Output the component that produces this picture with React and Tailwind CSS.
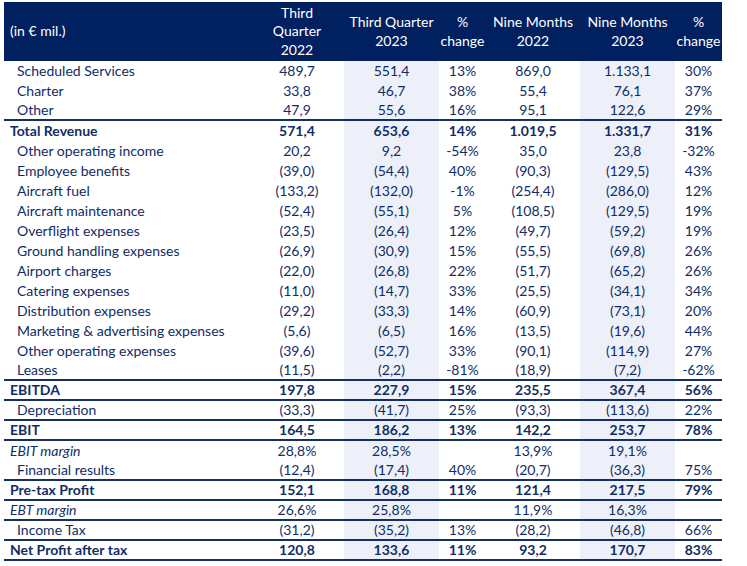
const cols = "grid grid-cols-[246px_94px_95px_47px_94px_95px_47px]";

const rows = [
  { label: "Scheduled Services", v: ["489,7", "551,4", "13%", "869,0", "1.133,1", "30%"], indent: true },
  { label: "Charter", v: ["33,8", "46,7", "38%", "55,4", "76,1", "37%"], indent: true },
  { label: "Other", v: ["47,9", "55,6", "16%", "95,1", "122,6", "29%"], indent: true, line: true },
  { label: "Total Revenue", v: ["571,4", "653,6", "14%", "1.019,5", "1.331,7", "31%"], bold: true },
  { label: "Other operating income", v: ["20,2", "9,2", "-54%", "35,0", "23,8", "-32%"], indent: true },
  { label: "Employee benefits", v: ["(39,0)", "(54,4)", "40%", "(90,3)", "(129,5)", "43%"], indent: true },
  { label: "Aircraft fuel", v: ["(133,2)", "(132,0)", "-1%", "(254,4)", "(286,0)", "12%"], indent: true },
  { label: "Aircraft maintenance", v: ["(52,4)", "(55,1)", "5%", "(108,5)", "(129,5)", "19%"], indent: true },
  { label: "Overflight expenses", v: ["(23,5)", "(26,4)", "12%", "(49,7)", "(59,2)", "19%"], indent: true },
  { label: "Ground handling expenses", v: ["(26,9)", "(30,9)", "15%", "(55,5)", "(69,8)", "26%"], indent: true },
  { label: "Airport charges", v: ["(22,0)", "(26,8)", "22%", "(51,7)", "(65,2)", "26%"], indent: true },
  { label: "Catering expenses", v: ["(11,0)", "(14,7)", "33%", "(25,5)", "(34,1)", "34%"], indent: true },
  { label: "Distribution expenses", v: ["(29,2)", "(33,3)", "14%", "(60,9)", "(73,1)", "20%"], indent: true },
  { label: "Marketing & advertising expenses", v: ["(5,6)", "(6,5)", "16%", "(13,5)", "(19,6)", "44%"], indent: true },
  { label: "Other operating expenses", v: ["(39,6)", "(52,7)", "33%", "(90,1)", "(114,9)", "27%"], indent: true },
  { label: "Leases", v: ["(11,5)", "(2,2)", "-81%", "(18,9)", "(7,2)", "-62%"], indent: true, line: true },
  { label: "EBITDA", v: ["197,8", "227,9", "15%", "235,5", "367,4", "56%"], bold: true, line: true },
  { label: "Depreciation", v: ["(33,3)", "(41,7)", "25%", "(93,3)", "(113,6)", "22%"], indent: true, line: true },
  { label: "EBIT", v: ["164,5", "186,2", "13%", "142,2", "253,7", "78%"], bold: true, line: true },
  { label: "EBIT margin", v: ["28,8%", "28,5%", "", "13,9%", "19,1%", ""], italic: true },
  { label: "Financial results", v: ["(12,4)", "(17,4)", "40%", "(20,7)", "(36,3)", "75%"], indent: true, line: true },
  { label: "Pre-tax Profit", v: ["152,1", "168,8", "11%", "121,4", "217,5", "79%"], bold: true, line: true },
  { label: "EBT margin", v: ["26,6%", "25,8%", "", "11,9%", "16,3%", ""], italic: true, line: true },
  { label: "Income Tax", v: ["(31,2)", "(35,2)", "13%", "(28,2)", "(46,8)", "66%"], indent: true, line: true },
  { label: "Net Profit after tax", v: ["120,8", "133,6", "11%", "93,2", "170,7", "83%"], bold: true, line: true },
];

function Row({ r }) {
  return (
    <div
      className={`${cols} h-[20px] ${r.line ? "border-b-2 border-[#142f66]" : ""} ${r.bold ? "font-bold" : ""}`}
    >
      <div className={`flex items-center ${r.indent ? "pl-[13px]" : "pl-[6px]"} ${r.italic ? "italic" : ""}`}>
        {r.label}
      </div>
      {r.v.map((val, i) => (
        <div
          key={i}
          className={`flex items-center justify-center ${i === 1 || i === 4 ? "bg-[#edf0f8]" : ""}`}
        >
          {val}
        </div>
      ))}
    </div>
  );
}

export default function App() {
  return (
    <div className="min-h-[566px] bg-white pl-[4px] pt-[2px] font-['Lato',sans-serif] text-[14px] leading-none text-[#102d66]">
      <div className="w-[718px]">
        <div className={`${cols} h-[59px] bg-[#002060] text-white leading-[18.5px]`}>
          <div className="flex items-center pl-[6px]">(in € mil.)</div>
          <div className="flex items-center justify-center text-center">
            Third<br />Quarter<br />2022
          </div>
          <div className="flex items-center justify-center text-center">
            Third Quarter<br />2023
          </div>
          <div className="flex items-center justify-center text-center">
            %<br />change
          </div>
          <div className="flex items-center justify-center text-center">
            Nine Months<br />2022
          </div>
          <div className="flex items-center justify-center text-center">
            Nine Months<br />2023
          </div>
          <div className="flex items-center justify-center text-center">
            %<br />change
          </div>
        </div>
        {rows.map((r) => (
          <Row key={r.label} r={r} />
        ))}
      </div>
    </div>
  );
}
